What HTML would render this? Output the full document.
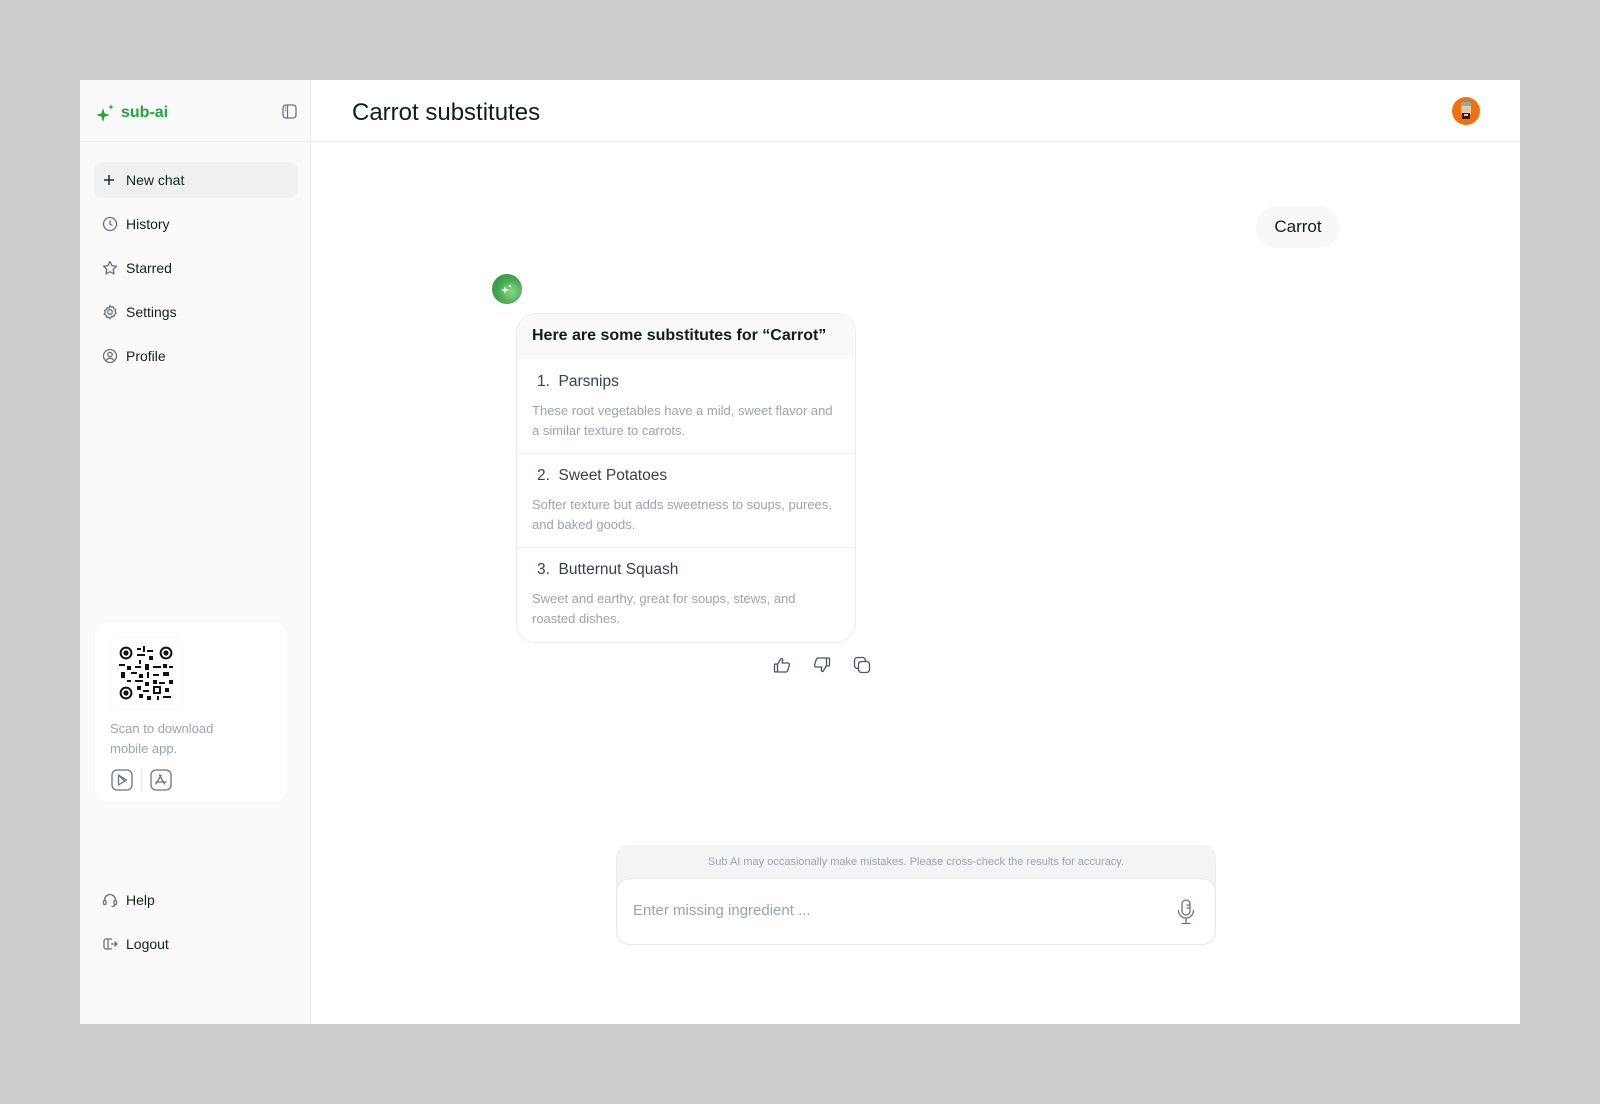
<!DOCTYPE html>
<html><head><meta charset="utf-8"><style>
*{box-sizing:border-box;margin:0;padding:0}
body{width:1600px;height:1104px;background:#cccccc;font-family:"Liberation Sans",sans-serif;position:relative;overflow:hidden}
.frame{position:absolute;left:80px;top:80px;width:1440px;height:944px;background:#fff;overflow:hidden}
.side{position:absolute;left:0;top:0;width:231px;height:944px;background:#fafafa;border-right:1px solid #f0f0f0}
.hline{position:absolute;left:0;top:61px;width:1440px;height:1px;background:#efefef}
.abs{position:absolute}
.nav{position:absolute;left:14px;width:204px;height:36px;display:flex;align-items:center;font-size:14px;color:#0f2415}
.nav svg{position:absolute;left:8px}
.nav span{position:absolute;left:32px}
.t{color:#374151;font-size:15.5px;position:absolute;left:20px}
.d{color:#9ca3af;font-size:13px;line-height:20px;position:absolute;left:15px;width:305px}
</style></head><body>
<div class="frame">
<div class="side">
  <svg class="abs" style="left:15px;top:23px" width="22" height="20" viewBox="0 0 22 20"><path d="M8 5 L9.6 10.4 L15 12 L9.6 13.6 L8 19 L6.4 13.6 L1 12 L6.4 10.4Z" fill="#22a63a"/><path d="M16 1 L16.7 3.3 L19 4 L16.7 4.7 L16 7 L15.3 4.7 L13 4 L15.3 3.3Z" fill="#22a63a"/></svg>
  <div class="abs" style="left:41px;top:24px;font-size:16px;font-weight:bold;color:#22a63a">sub-ai</div>
  <svg class="abs" style="left:202px;top:24px" width="15" height="15" viewBox="0 0 15 15" fill="none" stroke="#6b7280" stroke-width="1.3"><rect x="1" y="1" width="13" height="13" rx="3"/><path d="M5.5 1v13M3 4h1M3 6.5h1"/></svg>
  <div class="nav" style="top:82px;background:#eff0f1;border-radius:8px"><svg width="14" height="14" viewBox="0 0 14 14" stroke="#1f2937" stroke-width="1.5"><path d="M7 2v10M2 7h10"/></svg><span>New chat</span></div>
  <div class="nav" style="top:126px"><svg width="16" height="16" viewBox="0 0 16 16" fill="none" stroke="#6b7280" stroke-width="1.3"><circle cx="8" cy="8" r="6.5"/><path d="M8 4.5V8l2.5 1.5"/></svg><span>History</span></div>
  <div class="nav" style="top:170px"><svg width="16" height="16" viewBox="0 0 16 16" fill="none" stroke="#6b7280" stroke-width="1.3" stroke-linejoin="round"><path d="M8 1.5l2 4.2 4.5.6-3.3 3.1.8 4.5L8 11.7l-4 2.2.8-4.5L1.5 6.3 6 5.7Z"/></svg><span>Starred</span></div>
  <div class="nav" style="top:214px"><svg width="16" height="16" viewBox="0 0 16 16" fill="none" stroke="#6b7280" stroke-width="1.3"><circle cx="8" cy="8" r="2.3"/><path d="M8 1.5l1.3 1.6 2-.4.6 2 1.9.9-.6 2 .9 1.8-1.8 1-.4 2-2-.2L8 14.5l-1.5-1.4-2 .2-.4-2-1.8-1 .9-1.8-.6-2 1.9-.9.6-2 2 .4Z"/></svg><span>Settings</span></div>
  <div class="nav" style="top:258px"><svg width="16" height="16" viewBox="0 0 16 16" fill="none" stroke="#6b7280" stroke-width="1.3"><circle cx="8" cy="8" r="6.5"/><circle cx="8" cy="6.5" r="2.2"/><path d="M4 12.6c1-1.6 2.4-2.3 4-2.3s3 .7 4 2.3"/></svg><span>Profile</span></div>
  <div class="abs" style="left:15px;top:543px;width:192px;height:178px;background:#fff;border-radius:12px">
    <div class="abs" style="left:16px;top:15px;width:70px;height:70px;background:#fff;border-radius:8px;box-shadow:0 0 4px rgba(0,0,0,.06)">
      <svg class="abs" style="left:8px;top:8px" width="54" height="54" viewBox="0 0 27 27">
        <g fill="#111"><circle cx="3.5" cy="3.5" r="3.2"/><circle cx="23.5" cy="3.5" r="3.2"/><circle cx="3.5" cy="23.5" r="3.2"/></g>
        <g fill="#fff"><circle cx="3.5" cy="3.5" r="2.2"/><circle cx="23.5" cy="3.5" r="2.2"/><circle cx="3.5" cy="23.5" r="2.2"/></g>
        <g fill="#111"><circle cx="3.5" cy="3.5" r="1.3"/><circle cx="23.5" cy="3.5" r="1.3"/><circle cx="3.5" cy="23.5" r="1.3"/>
        <rect x="9" y="1" width="2" height="1"/><rect x="12" y="0" width="1" height="3"/><rect x="14" y="2" width="3" height="1"/><rect x="9" y="4" width="4" height="1"/><rect x="15" y="5" width="2" height="2"/><rect x="10" y="7" width="1" height="2"/>
        <rect x="0" y="9" width="3" height="1"/><rect x="4" y="10" width="2" height="2"/><rect x="8" y="10" width="3" height="1"/><rect x="13" y="9" width="2" height="3"/><rect x="17" y="10" width="4" height="1"/><rect x="22" y="9" width="2" height="2"/><rect x="25" y="10" width="2" height="1"/>
        <rect x="1" y="13" width="2" height="3"/><rect x="6" y="13" width="3" height="1"/><rect x="10" y="14" width="2" height="2"/><rect x="14" y="13" width="1" height="3"/><rect x="17" y="14" width="3" height="1"/><rect x="22" y="13" width="3" height="2"/>
        <rect x="4" y="17" width="2" height="1"/><rect x="8" y="17" width="4" height="1"/><rect x="13" y="18" width="2" height="2"/><rect x="17" y="17" width="2" height="2"/><rect x="20" y="18" width="3" height="1"/><rect x="25" y="17" width="2" height="2"/>
        <rect x="9" y="20" width="2" height="2"/><rect x="12" y="22" width="3" height="1"/><rect x="17" y="20" width="4" height="4"/><rect x="23" y="21" width="2" height="2"/><rect x="10" y="24" width="2" height="2"/><rect x="14" y="25" width="2" height="2"/><rect x="22" y="25" width="4" height="1"/><rect x="19" y="25" width="1" height="2"/></g>
        <rect x="18" y="21" width="2" height="2" fill="#fff"/>
      </svg>
    </div>
    <div class="abs" style="left:15px;top:96px;font-size:13px;line-height:20px;color:#9ca3af">Scan to download<br>mobile app.</div>
    <svg class="abs" style="left:16px;top:146px" width="22" height="22" viewBox="0 0 22 22" fill="none" stroke="#6b7280" stroke-width="1.3"><rect x="1" y="1" width="20" height="20" rx="5"/><path d="M7.5 6v10l8-5Z" stroke-linejoin="round"/><path d="M7.5 6l6 6"/></svg>
    <div class="abs" style="left:46px;top:147px;width:1px;height:20px;background:#e5e7eb"></div>
    <svg class="abs" style="left:55px;top:146px" width="22" height="22" viewBox="0 0 22 22" fill="none" stroke="#6b7280" stroke-width="1.3" stroke-linecap="round"><rect x="1" y="1" width="20" height="20" rx="5"/><path d="M11 6l-5 9M9.5 6l5 9M6 13h10"/></svg>
  </div>
  <div class="nav" style="top:802px"><svg width="16" height="16" viewBox="0 0 16 16" fill="none" stroke="#6b7280" stroke-width="1.3"><path d="M2.5 9V8a5.5 5.5 0 0111 0v1"/><rect x="1.5" y="8.5" width="2.5" height="4" rx="1"/><rect x="12" y="8.5" width="2.5" height="4" rx="1"/><path d="M13 12.5c0 1.3-1.5 2-3.5 2"/></svg><span>Help</span></div>
  <div class="nav" style="top:846px"><svg width="16" height="16" viewBox="0 0 16 16" fill="none" stroke="#6b7280" stroke-width="1.3" stroke-linejoin="round"><path d="M10 3H4a2 2 0 00-2 2v6a2 2 0 002 2h6"/><path d="M6 3v10"/><path d="M9 8h6M12.5 5.5L15 8l-2.5 2.5"/></svg><span>Logout</span></div>
</div>
<div class="hline"></div>
<div class="abs" style="left:272px;top:19px;font-size:24px;color:#0f1f14">Carrot substitutes</div>
<div class="abs" style="left:1372px;top:17px;width:28px;height:28px;border-radius:50%;background:#f56e0f;overflow:hidden">
  <div class="abs" style="left:9px;top:5px;width:10px;height:4px;background:#7fb0b8"></div>
  <div class="abs" style="left:9px;top:9px;width:10px;height:8px;background:#e7c7a5"></div>
  <div class="abs" style="left:10px;top:16px;width:8px;height:6px;background:#222"></div>
  <div class="abs" style="left:12px;top:17px;width:4px;height:2px;background:#e7c7a5"></div>
</div>
<div class="abs" style="left:1176px;top:126px;width:84px;height:42px;border-radius:21px;background:#f8f8f8;font-size:17px;color:#0f1f14;text-align:center;line-height:42px">Carrot</div>
<div class="abs" style="left:412px;top:194px;width:30px;height:30px;border-radius:50%;background:radial-gradient(circle at 65% 60%,#8cd68c,#3fa34d 55%,#2f8f3e)">
  <svg class="abs" style="left:7px;top:7px" width="16" height="16" viewBox="0 0 16 16"><path d="M6 5l1 3 3 1-3 1-1 3-1-3-3-1 3-1Z" fill="#fff"/><path d="M11 3l.5 1.5 1.5.5-1.5.5L11 7l-.5-1.5L9 5l1.5-.5Z" fill="#fff"/></svg>
</div>
<div class="abs" style="left:436px;top:233px;width:340px;height:330px;border:1px solid #ececec;border-radius:20px;overflow:hidden;background:#fff">
  <div class="abs" style="left:0;top:0;width:340px;height:45px;background:#f9f9f9"></div>
  <div class="abs" style="left:15px;top:13px;font-size:16px;font-weight:bold;color:#0f1f14">Here are some substitutes for “Carrot”</div>
  <div class="t" style="top:59px">1.&nbsp; Parsnips</div>
  <div class="d" style="top:87px">These root vegetables have a mild, sweet flavor and a similar texture to carrots.</div>
  <div class="abs" style="left:0;top:139px;width:340px;height:1px;background:#f0f0f0"></div>
  <div class="t" style="top:153px">2.&nbsp; Sweet Potatoes</div>
  <div class="d" style="top:181px">Softer texture but adds sweetness to soups, purees, and baked goods.</div>
  <div class="abs" style="left:0;top:233px;width:340px;height:1px;background:#f0f0f0"></div>
  <div class="t" style="top:247px">3.&nbsp; Butternut Squash</div>
  <div class="d" style="top:275px">Sweet and earthy, great for soups, stews, and roasted dishes.</div>
</div>
<svg class="abs" style="left:693px;top:576px" width="18" height="18" viewBox="0 0 18 18" fill="none" stroke="#4b5563" stroke-width="1.3" stroke-linejoin="round"><rect x="1.5" y="8" width="3" height="8" rx="1"/><path d="M4.5 8.5L8 2.5c1.2 0 2 .8 1.7 2.2L9.2 7H15a1.5 1.5 0 011.4 1.9l-1.7 5.8A1.8 1.8 0 0113 16H4.5"/></svg>
<svg class="abs" style="left:733px;top:576px" width="18" height="18" viewBox="0 0 18 18" fill="none" stroke="#4b5563" stroke-width="1.3" stroke-linejoin="round"><rect x="13.5" y="2" width="3" height="8" rx="1"/><path d="M13.5 9.5L10 15.5c-1.2 0-2-.8-1.7-2.2L8.8 11H3a1.5 1.5 0 01-1.4-1.9l1.7-5.8A1.8 1.8 0 015 2h8.5"/></svg>
<svg class="abs" style="left:773px;top:576px" width="18" height="18" viewBox="0 0 18 18" fill="none" stroke="#4b5563" stroke-width="1.3"><rect x="5.5" y="5.5" width="11" height="11" rx="3"/><path d="M12.5 5.5V4.5a3 3 0 00-3-3h-5a3 3 0 00-3 3v5a3 3 0 003 3h1"/></svg>
<div class="abs" style="left:536px;top:765px;width:600px;height:100px;border-radius:14px;background:#f3f4f6;border:1px solid #eeeeee">
  <div class="abs" style="left:0;top:10px;width:598px;text-align:center;font-size:11px;color:#9ca3af">Sub AI may occasionally make mistakes. Please cross-check the results for accuracy.</div>
  <div class="abs" style="left:-1px;top:32px;width:600px;height:67px;background:#fff;border:1px solid #e8e8e8;border-radius:14px">
    <div class="abs" style="left:16px;top:23px;font-size:15px;color:#9ca3af">Enter missing ingredient ...</div>
    <svg class="abs" style="left:558px;top:20px" width="22" height="26" viewBox="0 0 22 26" fill="none" stroke="#6b7280" stroke-width="1.3" stroke-linecap="round"><rect x="7" y="1" width="8" height="15" rx="4"/><path d="M3.5 11.5a7.5 7.5 0 0015 0M11 19v5M7 24.5h8M12 6h3M12 9h3"/></svg>
  </div>
</div>
</div>
</body></html>
